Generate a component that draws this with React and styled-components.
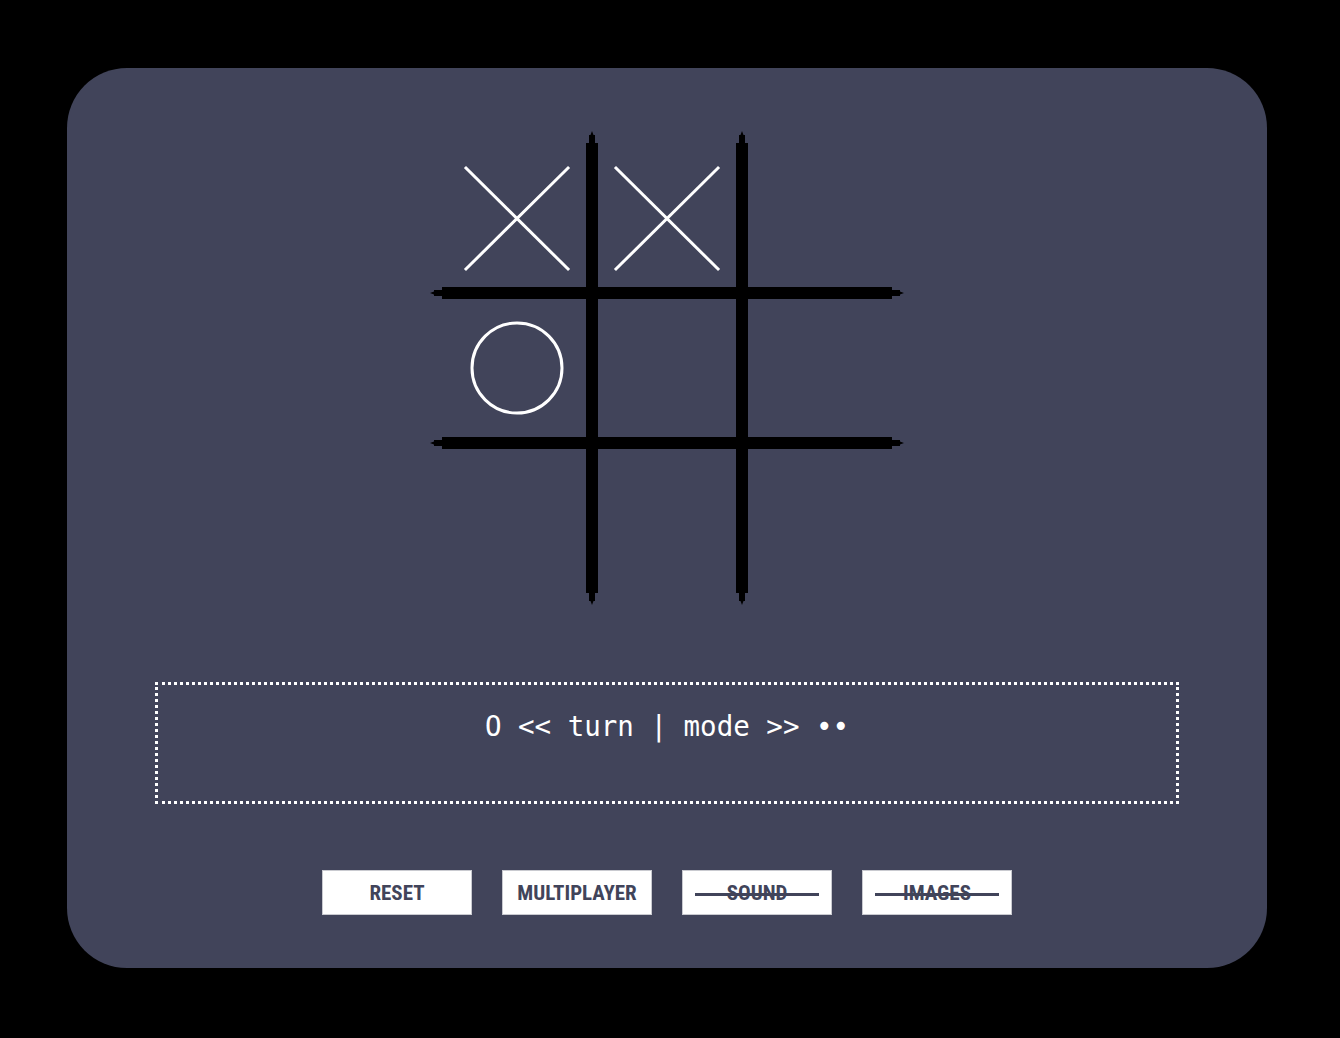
import React, { useState } from 'react';
import styled, { createGlobalStyle } from 'styled-components';

const GlobalStyle = createGlobalStyle`
  html, body {
    margin: 0;
    padding: 0;
    background: #000;
  }
  body {
    font-family: "Liberation Sans", Arial, sans-serif;
  }
`;

const Page = styled.div`
  width: 1340px;
  height: 1038px;
  padding: 68px 0 0 67px;
  box-sizing: border-box;
  background: #000;
`;

const Card = styled.div`
  width: 1200px;
  height: 900px;
  box-sizing: border-box;
  background: #41445a;
  border-radius: 60px;
  display: flex;
  flex-direction: column;
  align-items: center;
  padding-top: 63px;
`;

const Board = styled.svg`
  display: block;
  width: 474px;
  height: 474px;
`;

const Status = styled.div`
  margin-top: 77px;
  width: 1024px;
  height: 122px;
  box-sizing: border-box;
  border: 3px dotted #fff;
  padding-top: 25px;
  text-align: center;
  color: #fff;
  font-family: "DejaVu Sans Mono", "Liberation Mono", monospace;
  font-size: 27.5px;
  white-space: pre;
`;

const Buttons = styled.div`
  margin-top: 66px;
  display: flex;
  gap: 30px;
`;

const Button = styled.button`
  position: relative;
  width: 150px;
  height: 45px;
  box-sizing: border-box;
  background: #fff;
  border: 1px solid #c9cad0;
  border-radius: 0;
  padding: 0;
  display: flex;
  align-items: center;
  justify-content: center;
  color: #41445a;
  font-family: "Liberation Sans Narrow", "Roboto Condensed", "Arial Narrow", sans-serif;
  font-weight: bold;
  font-size: 21px;
  cursor: pointer;

  &::after {
    content: '';
    display: ${({ $off }) => ($off ? 'block' : 'none')};
    position: absolute;
    left: 12px;
    right: 12px;
    top: 22px;
    height: 3px;
    background: #41445a;
  }
`;

// grid bar with pencil-like tapered ends, drawn along x
const barPath = (len) =>
  `M0 6 L4 4.5 L4 3 L12 3 L12 0 L${len - 12} 0 L${len - 12} 3 L${len - 4} 3 L${len - 4} 4.5 L${len} 6 L${len - 4} 7.5 L${len - 4} 9 L${len - 12} 9 L${len - 12} 12 L12 12 L12 9 L4 9 L4 7.5 Z`;

const Cross = ({ cx, cy }) => (
  <g stroke="#fff" strokeWidth="3" strokeLinecap="square">
    <line x1={cx - 51} y1={cy - 50} x2={cx + 51} y2={cy + 51} />
    <line x1={cx + 51} y1={cy - 50} x2={cx - 51} y2={cy + 51} />
  </g>
);

const Nought = ({ cx, cy }) => (
  <circle cx={cx} cy={cy} r="45" fill="none" stroke="#fff" strokeWidth="3" />
);

const App = () => {
  const [cells] = useState(['x', 'x', null, 'o', null, null, null, null, null]);
  const origin = 12;
  const size = 150;
  const len = 474;

  return (
    <>
      <GlobalStyle />
      <Page>
        <Card>
          <Board viewBox="0 0 474 474">
            {[1, 2].map((i) => (
              <path
                key={'h' + i}
                d={barPath(len)}
                fill="#000"
                transform={`translate(0 ${origin + size * i - 6})`}
              />
            ))}
            {[1, 2].map((i) => (
              <path
                key={'v' + i}
                d={barPath(len)}
                fill="#000"
                transform={`translate(${origin + size * i + 6} 0) rotate(90)`}
              />
            ))}
            {cells.map((c, i) => {
              const cx = origin + (i % 3) * size + size / 2;
              const cy = origin + Math.floor(i / 3) * size + size / 2;
              if (c === 'x') return <Cross key={i} cx={cx} cy={cy} />;
              if (c === 'o') return <Nought key={i} cx={cx} cy={cy} />;
              return null;
            })}
          </Board>
          <Status>O &lt;&lt; turn | mode &gt;&gt; ••</Status>
          <Buttons>
            <Button>RESET</Button>
            <Button>MULTIPLAYER</Button>
            <Button $off>SOUND</Button>
            <Button $off>IMAGES</Button>
          </Buttons>
        </Card>
      </Page>
    </>
  );
};

export default App;
